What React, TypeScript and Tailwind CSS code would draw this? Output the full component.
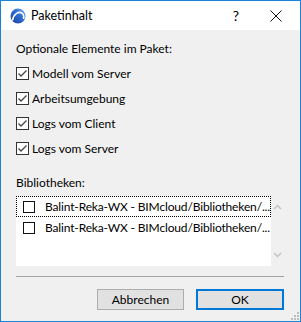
import React from "react";

const font = { fontFamily: 'Lato, "Noto Sans", sans-serif' };

function Check({ checked }: { checked: boolean }) {
  return (
    <svg width="13" height="13" viewBox="0 0 13 13" className="shrink-0">
      <rect x="0.5" y="0.5" width="12" height="12" fill="#fff" stroke="#333" />
      {checked && (
        <polyline points="2.5,6.5 5,9 10.5,3.5" fill="none" stroke="#444" strokeWidth="1.3" />
      )}
    </svg>
  );
}

function Logo() {
  return (
    <svg width="16" height="16" viewBox="0 0 16 16">
      <defs>
        <linearGradient id="lg" x1="0" y1="1" x2="1" y2="0">
          <stop offset="0" stopColor="#1b3f9e" />
          <stop offset="0.6" stopColor="#2f6fd6" />
          <stop offset="1" stopColor="#7ab8f5" />
        </linearGradient>
      </defs>
      <circle cx="8" cy="8" r="7.5" fill="url(#lg)" />
      <path d="M2.5 12.5 C3.5 6 9 2.5 12.5 5.5 C13.8 6.8 14 9 13.5 11" fill="none" stroke="#fff" strokeWidth="1.6" />
    </svg>
  );
}

const rows = ["Modell vom Server", "Arbeitsumgebung", "Logs vom Client", "Logs vom Server"];

export default function App() {
  return (
    <div
      className="relative w-[301px] h-[322px] border border-[#1883d7] bg-[#f0f0f0] flex flex-col text-[12px] text-black"
      style={font}
    >
      <div className="h-[29px] bg-white flex items-center pl-[9px]">
        <Logo />
        <span className="ml-[5px] text-[12.5px] leading-[16px]">Paketinhalt</span>
        <span className="ml-auto text-[14px] leading-[16px] mr-[31px]">?</span>
        <svg width="12" height="12" viewBox="0 0 12 12" className="mr-[18px]">
          <path d="M0.5 0.5 L11.5 11.5 M11.5 0.5 L0.5 11.5" stroke="#111" strokeWidth="1" />
        </svg>
      </div>
      <div className="flex-1 flex flex-col pl-[15px] pr-[16px] pt-[11px]">
        <div className="leading-[16px]">Optionale Elemente im Paket:</div>
        <div className="mt-[4px] flex flex-col">
          {rows.map((r) => (
            <div key={r} className="h-[25px] flex items-center">
              <Check checked />
              <span className="ml-[3px] leading-[16px]">{r}</span>
            </div>
          ))}
        </div>
        <div className="mt-[14px] leading-[16px]">Bibliotheken:</div>
        <div className="mt-[5px] h-[70px] flex">
          <div className="flex-1 bg-white flex flex-col">
            <div className="h-[21px] flex items-center border border-dotted border-black pl-[6px]">
              <svg width="12" height="12" viewBox="0 0 12 12" className="shrink-0">
                <rect x="0.5" y="0.5" width="11" height="11" fill="#fff" stroke="#111" />
              </svg>
              <span className="ml-[10px] whitespace-nowrap overflow-hidden leading-[16px] tracking-[-0.15px]">
                Balint-Reka-WX - BIMcloud/Bibliotheken/...
              </span>
            </div>
            <div className="h-[21px] flex items-center pl-[7px]">
              <svg width="12" height="12" viewBox="0 0 12 12" className="shrink-0">
                <rect x="0.5" y="0.5" width="11" height="11" fill="#fff" stroke="#111" />
              </svg>
              <span className="ml-[10px] whitespace-nowrap overflow-hidden leading-[16px] tracking-[-0.15px]">
                Balint-Reka-WX - BIMcloud/Bibliotheken/...
              </span>
            </div>
          </div>
          <div className="w-[15px] flex flex-col items-center justify-between py-[8px]">
            <svg width="9" height="6" viewBox="0 0 9 6">
              <polyline points="1,5 4.5,1.5 8,5" fill="none" stroke="#c2c2c2" strokeWidth="1.5" />
            </svg>
            <svg width="9" height="6" viewBox="0 0 9 6">
              <polyline points="1,1 4.5,4.5 8,1" fill="none" stroke="#c2c2c2" strokeWidth="1.5" />
            </svg>
          </div>
        </div>
        <div className="mt-[10px] h-px bg-[#a0a0a0]" />
        <div className="mt-[12px] flex justify-end gap-[12px]">
          <button className="w-[87px] h-[21px] bg-[#e1e1e1] border border-[#adadad] leading-[16px]">
            Abbrechen
          </button>
          <button className="w-[88px] h-[21px] bg-[#e1e1e1] border-2 border-[#0078d7] leading-[16px]">
            OK
          </button>
        </div>
      </div>
      <svg width="8" height="8" viewBox="0 0 8 8" className="absolute right-[1px] bottom-[1px]">
        <rect x="6" y="0" width="2" height="2" fill="#bcbcbc" />
        <rect x="3" y="3" width="2" height="2" fill="#bcbcbc" />
        <rect x="6" y="3" width="2" height="2" fill="#bcbcbc" />
        <rect x="0" y="6" width="2" height="2" fill="#bcbcbc" />
        <rect x="3" y="6" width="2" height="2" fill="#bcbcbc" />
        <rect x="6" y="6" width="2" height="2" fill="#bcbcbc" />
      </svg>
    </div>
  );
}
